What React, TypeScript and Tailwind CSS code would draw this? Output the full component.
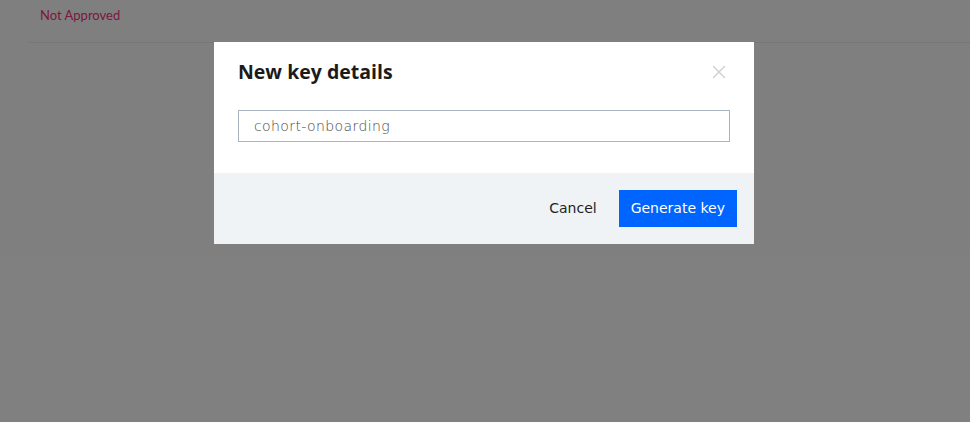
import { X } from "lucide-react";

export default function App() {
  return (
    <div className="relative h-[422px] w-[970px] overflow-hidden bg-white font-['DejaVu_Sans',sans-serif]">
      {/* page behind the dialog */}
      <div className="pl-[28px]">
        <div className="h-[43px] border-b border-[#efefef] pl-[12px] pt-[6px] font-['Lato',sans-serif] text-[13px] text-[#f5327a]">
          Not Approved
        </div>
      </div>

      <div className="absolute inset-0 bg-black/50" />

      <div className="absolute left-[214px] top-[42px] w-[540px] bg-white">
        <div className="px-6 pb-[31px]">
          <div className="flex items-center justify-between pt-[16px]">
            <h2 className="font-['Open_Sans',sans-serif] text-[19.5px] leading-[28px] font-bold text-[#1b1b1b]">
              New key details
            </h2>
            <X className="h-[22px] w-[22px] text-[#cfcfcf]" strokeWidth={1.5} />
          </div>
          <input
            readOnly
            value="cohort-onboarding"
            className="mt-[24px] h-[32px] w-full border border-[#a9b4c1] px-[15px] text-[14px] font-extralight tracking-[0.4px] text-[#4a4a4a] outline-none"
          />
        </div>
        <div className="flex items-center justify-end gap-[22px] bg-[#f0f3f6] px-[17px] py-[17px]">
          <button className="text-[14px] text-[#1f1f1f]">Cancel</button>
          <button className="h-[37px] bg-[#0064ff] px-[12px] text-[14px] text-white">Generate key</button>
        </div>
      </div>
    </div>
  );
}
